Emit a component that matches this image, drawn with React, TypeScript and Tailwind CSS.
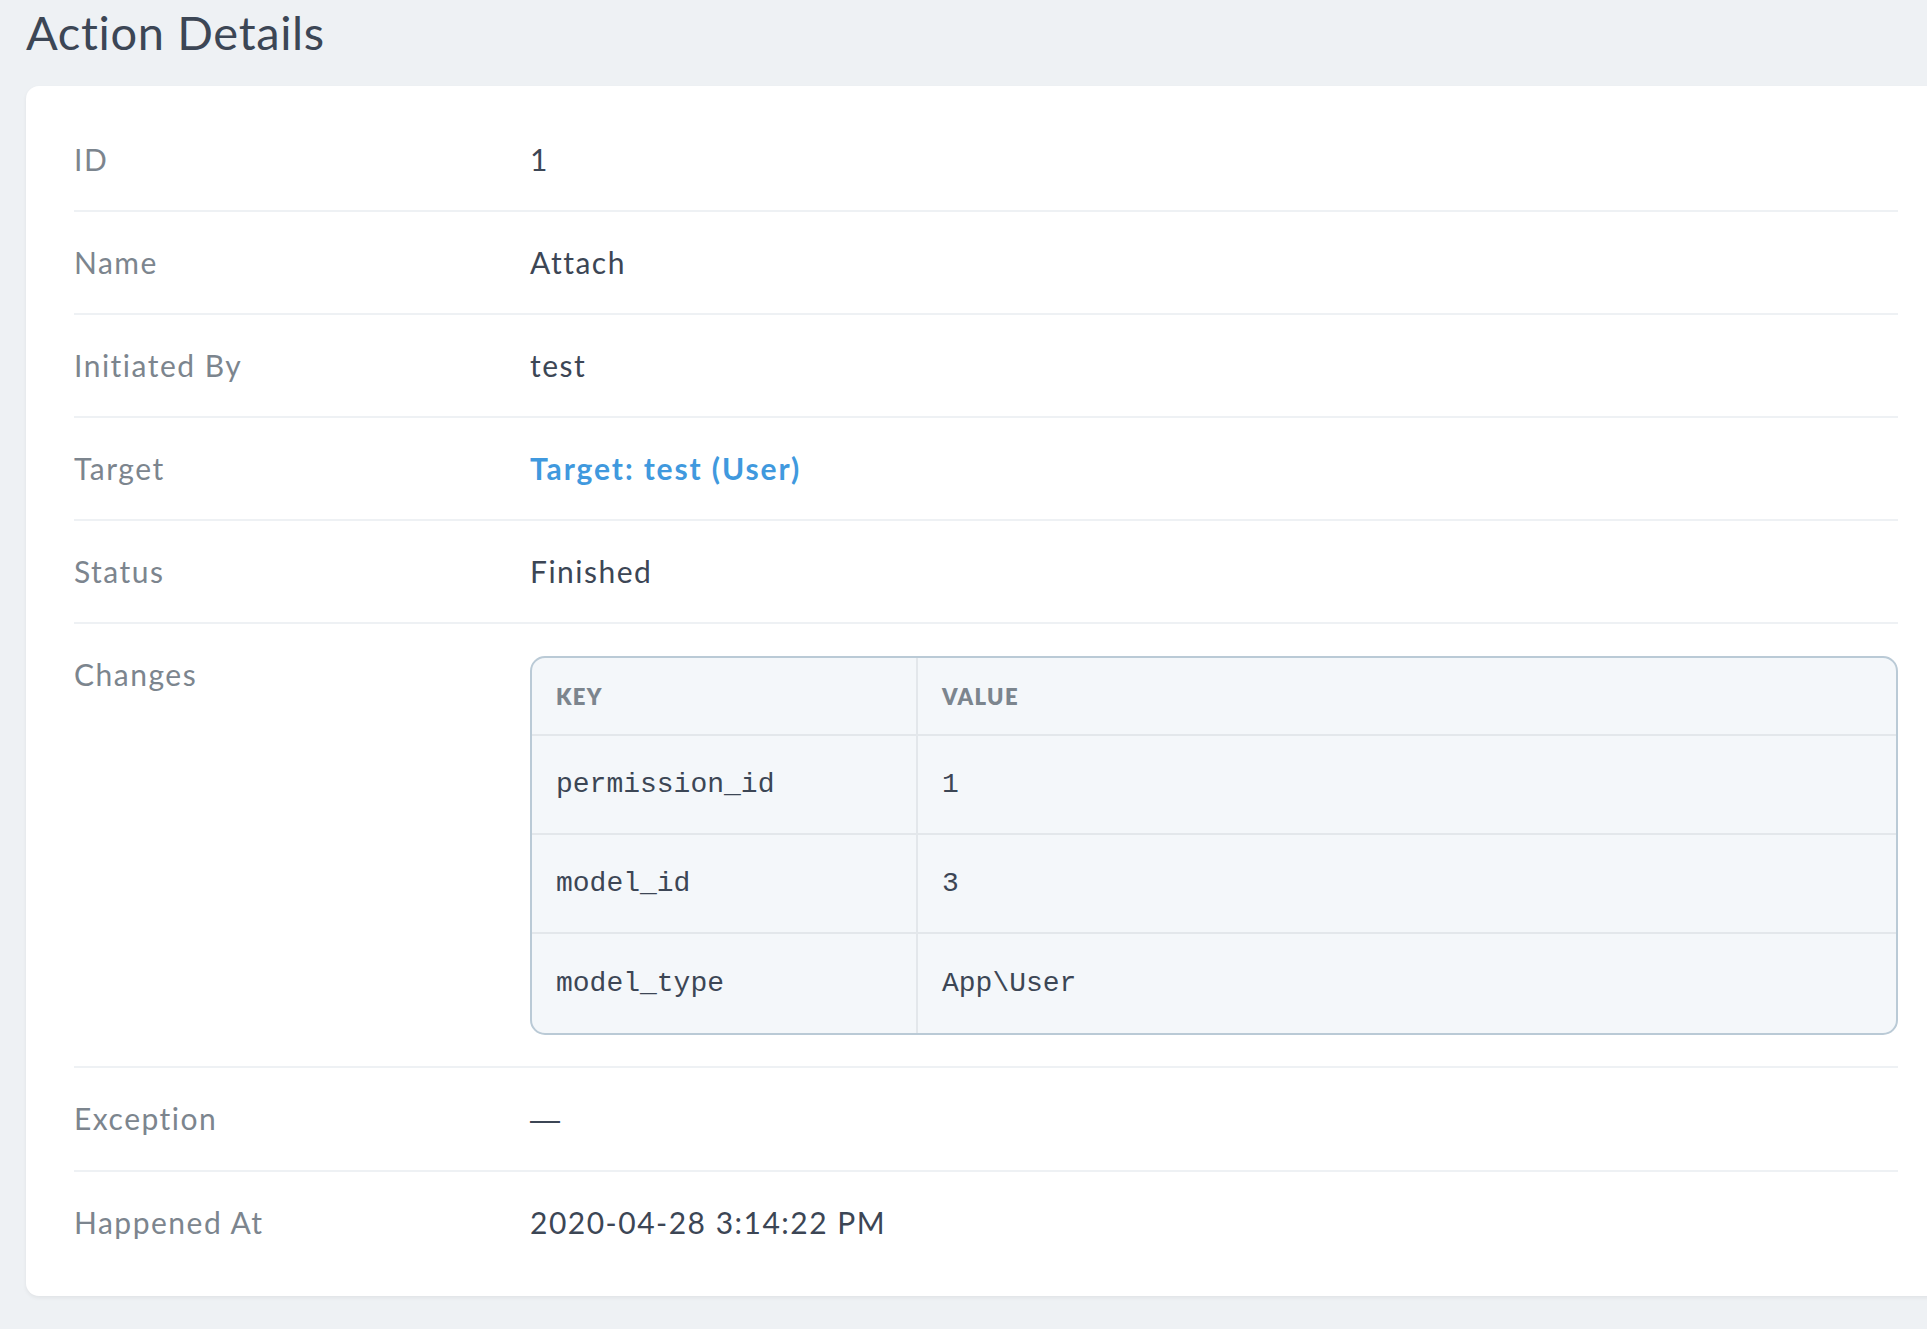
const rows: { label: string; value: string; kind?: 'link' | 'changes' | 'dash' }[] = [
  { label: 'ID', value: '1' },
  { label: 'Name', value: 'Attach' },
  { label: 'Initiated By', value: 'test' },
  { label: 'Target', value: 'Target: test (User)', kind: 'link' },
  { label: 'Status', value: 'Finished' },
  { label: 'Changes', value: '', kind: 'changes' },
  { label: 'Exception', value: '—', kind: 'dash' },
  { label: 'Happened At', value: '2020-04-28 3:14:22 PM' },
]

const changes = [
  ['permission_id', '1'],
  ['model_id', '3'],
  ['model_type', 'App\\User'],
]

function ChangesTable() {
  return (
    <div className="mt-[2px] overflow-hidden rounded-[15px] border-2 border-[#bacad6] bg-[#f4f7fa] tracking-normal">
      <div className="flex h-[78px] items-center border-b-2 border-[#e3e7eb]">
        <div className="flex h-full w-[386px] items-center border-r-2 border-[#e3e7eb] px-[24px] text-[22px] font-extrabold uppercase tracking-[0.06em] text-[#7c858e]">
          Key
        </div>
        <div className="px-[24px] text-[22px] font-extrabold uppercase tracking-[0.06em] text-[#7c858e]">Value</div>
      </div>
      {changes.map(([k, v], i) => (
        <div
          key={k}
          className={`flex h-[99px] items-center font-['Liberation_Mono',monospace] text-[28px] text-[#3c4655] ${
            i < changes.length - 1 ? 'border-b-2 border-[#e3e7eb]' : ''
          }`}
        >
          <div className="flex h-full w-[386px] items-center border-r-2 border-[#e3e7eb] px-[24px]">{k}</div>
          <div className="px-[24px]">{v}</div>
        </div>
      ))}
    </div>
  )
}

export default function App() {
  return (
    <div className="min-h-screen w-full overflow-hidden bg-[#eef1f4] pl-[26px] font-['Lato',sans-serif]">
      {/* Header */}
      <h1 className="pt-[9px] text-[47px] font-normal leading-none tracking-[0.014em] text-[#3c4655]">Action Details</h1>

      {/* Detail card */}
      <div className="mt-[30px] w-[1920px] rounded-[13px] bg-white px-[48px] pb-[23px] pt-[23px] shadow-[0_2px_4px_0_rgba(0,0,0,0.06)]">
        {rows.map((row, i) => (
          <div
            key={row.label}
            className={`flex py-[30px] ${i < rows.length - 1 ? 'border-b-2 border-[#eef1f4]' : ''} ${
              row.kind === 'changes' ? 'pb-[31px]' : ''
            }`}
          >
            <div className="w-1/4 text-[30px] leading-[41px] tracking-[0.05em] text-[#7c858e]">{row.label}</div>
            <div className="w-3/4 text-[30px] leading-[41px] tracking-[0.05em] text-[#3c4655]">
              {row.kind === 'link' ? (
                <a className="font-bold tracking-[0.063em] text-[#4099de]">{row.value}</a>
              ) : row.kind === 'changes' ? (
                <ChangesTable />
              ) : row.kind === 'dash' ? (
                <span className="font-['Liberation_Sans',sans-serif] tracking-normal">{row.value}</span>
              ) : (
                row.value
              )}
            </div>
          </div>
        ))}
      </div>
    </div>
  )
}
